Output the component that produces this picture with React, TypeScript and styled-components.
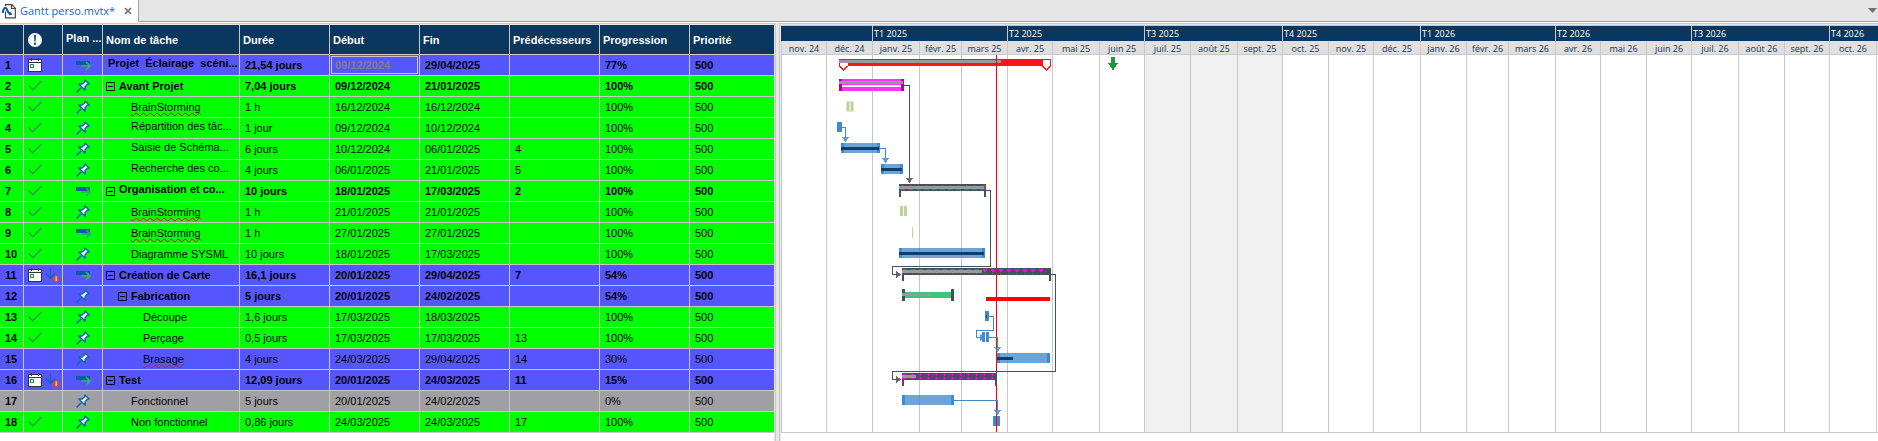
import React from "react";
import styled, { createGlobalStyle, css } from "styled-components";

const color = {
  navy: "#0a3760",
  line: "#c8c8c8",
  chrome: "#e6e6e6",
  blue: "#5656ff",
  green: "#00ff00",
  grey: "#a0a0a4",
  task: "#428bca",
  slate: "#46505c",
  done: "#999999",
  magenta: "#ff00ff",
};

const GlobalStyle = createGlobalStyle`
  *, *::before, *::after { box-sizing: border-box; }
  body { margin: 0; background: #fff; font-family: "Liberation Sans", Arial, sans-serif; font-size: 11px; color: #000; }
`;

const Page = styled.div`
  display: flex;
  flex-direction: column;
  min-height: 100vh;
  overflow: hidden;
`;

/* ---------- document tabs ---------- */

const TabBar = styled.header`
  display: flex;
  flex: none;
  height: 22px;
  margin-bottom: 1px;
  background: ${color.chrome};
`;

const Tab = styled.div`
  display: flex;
  align-items: center;
  gap: 4px;
  padding: 0 4px 0 2px;
  background: #fff;
  border-right: 1px solid #a0a0a0;
`;

const TabLink = styled.a`
  width: 98px;
  font: 11px/16px "Open Sans", "Segoe UI", sans-serif;
  color: #1e62c4;
  text-decoration: none;
  white-space: nowrap;
`;

const IconButton = styled.button`
  display: flex;
  align-items: center;
  justify-content: center;
  width: 12px;
  height: 16px;
  padding: 0;
  border: 0;
  background: none;
`;

const TabFiller = styled.div`
  display: flex;
  flex: 1;
  align-items: center;
  justify-content: flex-end;
  border-bottom: 1px solid #a0a0a0;
`;

/* ---------- split panes ---------- */

const Workspace = styled.main`
  display: flex;
  flex: 1;
`;

const TablePane = styled.section`
  flex: none;
  border: solid ${color.line};
  border-width: 1px 1px 0 0;
`;

const ChartPane = styled.section`
  flex: 1;
  min-width: 0;
  border: solid ${color.line};
  border-width: 1px 0 0 1px;
`;

const PaneInner = styled.div<{ $side: "left" | "right" }>`
  height: 100%;
  overflow: hidden;
  border: solid ${color.chrome};
  border-width: ${(p) => (p.$side === "left" ? "1px 1px 0 0" : "1px 0 0 1px")};
`;

const Splitter = styled.div`
  flex: none;
  width: 3px;
  background: ${color.chrome};
`;

/* ---------- task table ---------- */

const Table = styled.table`
  width: 774px;
  table-layout: fixed;
  border-collapse: separate;
  border-spacing: 0;
`;

const HeadCell = styled.th<{ $clipped?: boolean }>`
  height: 30px;
  padding: 0 0 ${(p) => (p.$clipped ? "4px" : "0")} 3px;
  border: solid ${color.line};
  border-width: 0 1px 1px 0;
  background: ${color.navy};
  color: #fff;
  text-align: left;
  line-height: 14px;
  white-space: nowrap;
  overflow: hidden;
  &:last-child { border-right: 0; }
`;

const Row = styled.tr<{ $tone: "blue" | "green" | "grey"; $bold?: boolean }>`
  background: ${(p) => color[p.$tone]};
  font-weight: ${(p) => (p.$bold ? 700 : 400)};
`;

const cellBase = css`
  height: 21px;
  padding: 0;
  border: solid ${color.line};
  border-width: 0 1px 1px 0;
  line-height: 14px;
  white-space: pre;
  overflow: hidden;
  &:last-child { border-right: 0; }
`;

const Cell = styled.td`
  ${cellBase}
  padding-left: 5px;
`;

const FlushCell = styled.td`
  ${cellBase}
`;

const NumberCell = styled.th`
  ${cellBase}
  padding-left: 5px;
  text-align: left;
  font-weight: 700;
`;

const EditCell = styled.td`
  ${cellBase}
  padding: 1px;
`;

const DateInput = styled.input`
  display: block;
  width: 100%;
  height: 18px;
  padding: 0 0 0 3px;
  border: 1px solid ${color.line};
  outline: 0;
  background: transparent;
  font: 700 11px "Liberation Sans", Arial, sans-serif;
  color: #808080;
`;

const IconRow = styled.div<{ $align: "start" | "center" | "head" }>`
  display: flex;
  align-items: center;
  justify-content: ${(p) => (p.$align === "center" ? "center" : "flex-start")};
  gap: 3px;
  padding-left: ${(p) => ({ start: 4, center: 0, head: 1 })[p.$align]}px;
`;

const NameRow = styled.div<{ $level: number }>`
  display: flex;
  align-items: center;
  gap: 4px;
  padding-left: ${(p) => 3 + p.$level * 12}px;
`;

type LabelKind = "root" | "summary" | "leaf";

const labelInset: Record<LabelKind, number> = { root: 2, summary: 0, leaf: 13 };

const NameText = styled.span<{ $kind: LabelKind; $clipped?: boolean }>`
  padding: 0 0 ${(p) => (p.$clipped ? "4px" : "0")} ${(p) => labelInset[p.$kind]}px;
`;

const Misspelt = styled.span`
  text-decoration: underline wavy #f00 1px;
  text-decoration-skip-ink: none;
  text-underline-offset: 1px;
`;

const Toggle = styled.button`
  display: block;
  flex: none;
  width: 9px;
  height: 9px;
  padding: 0;
  border: 0;
  background: none;
  svg { display: block; }
`;

/* ---------- icons ---------- */

const AlertIcon = () => (
  <svg width="14" height="14" viewBox="0 0 14 14" aria-hidden="true">
    <circle cx="7" cy="7" r="7" fill="#fff" />
    <path d="M6 2h2l-.3 6.400H6.300z" fill="#0a5aa5" />
    <circle cx="7" cy="10.700" r="1.200" fill="#0a5aa5" />
  </svg>
);

const CalendarIcon = () => (
  <svg width="14" height="14" viewBox="0 0 14 14" aria-hidden="true">
    <rect x=".5" y="1.500" width="13" height="12" fill="#fff" stroke="#333" />
    <path d="M.5 4.500h13M3.500 0v3M10.500 0v3" stroke="#333" fill="none" />
    <rect x="2.500" y="6.500" width="3" height="3" fill="#fff" stroke="#1c9640" />
  </svg>
);

const LateIcon = () => (
  <svg width="15" height="14" viewBox="0 0 15 14" aria-hidden="true">
    <path d="M5.500 0v10M.7 5.500l4.800 4.800 4.800-4.800" stroke="#1562b4" strokeWidth="1.300" fill="none" />
    <circle cx="11.300" cy="10.800" r="3.200" fill="#d8492c" />
    <path d="M11.300 8.500v4.500" stroke="#f5c5b5" strokeWidth="1.400" />
  </svg>
);

const CheckIcon = () => (
  <svg width="14" height="14" viewBox="0 0 14 14" aria-hidden="true">
    <path d="M.5 6.500l4.300 4.300L13.500 2" stroke="#2f9a4c" strokeWidth="1.500" fill="none" />
  </svg>
);

const PinIcon = () => (
  <svg width="14" height="14" viewBox="0 0 14 14" aria-hidden="true">
    <path d="M5.200 8.800L.6 13.400" stroke="#1464b4" strokeWidth="1.500" />
    <path
      d="M9 .9L13.100 5 11.300 5.200 9 7.800 9.300 11.200 2.800 4.900 6.200 5 8.800 2.700z"
      fill="#fff"
      stroke="#1464b4"
      strokeWidth="1.400"
      strokeLinejoin="round"
    />
  </svg>
);

const AutoIcon = ({ arrow }: { arrow: string }) => (
  <svg width="16" height="14" viewBox="0 0 16 14" aria-hidden="true">
    <path d="M1 3h14v4H1z" fill="#0a5aaa" />
    <path d="M6.500 8h8.500M11 4l4 4-4 4" stroke={arrow} strokeWidth="1.600" fill="none" />
  </svg>
);

const CollapseGlyph = () => (
  <svg width="9" height="9" viewBox="0 0 9 9" aria-hidden="true">
    <path d="M.5.5h8v8h-8zM2 4.500h5" stroke="#000" fill="none" />
  </svg>
);

const FileIcon = () => (
  <svg width="14" height="15" viewBox="0 0 14 15" aria-hidden="true">
    <path d="M3.500.7h6.300l3.500 3.500v9.600H3.500z" fill="#fff" stroke="#444" strokeWidth="1.200" />
    <path d="M9.500.7v3.800h3.800" fill="none" stroke="#444" strokeWidth="1.200" />
    <path d="M0 9C1 3 4 3 5 5.500c.8 2 1 4 4 4.500" fill="none" stroke="#fff" strokeWidth="4" />
    <path d="M.8 9C1 3.500 4 2.500 5 5.500c.6 2.500 1.500 4 4 4.500" fill="none" stroke="#0d5aa8" strokeWidth="2" />
    <path d="M8 7.500l2.500 3L7 11.500z" fill="#0d5aa8" />
  </svg>
);

/* ---------- data ---------- */

type Task = {
  tone: "blue" | "green" | "grey";
  flag?: "check" | "cal" | "late";
  plan: "pin" | "auto";
  level: number;
  kind: LabelKind;
  name: string;
  misspelt?: boolean;
  duration: string;
  start: string;
  end: string;
  pred?: string;
  progress: string;
};

const tasks: Task[] = [
  { tone: "blue", flag: "cal", plan: "auto", level: 0, kind: "root", name: "Projet  Éclairage  scéni...", duration: "21,54 jours", start: "09/12/2024", end: "29/04/2025", progress: "77%" },
  { tone: "green", flag: "check", plan: "pin", level: 0, kind: "summary", name: "Avant Projet", duration: "7,04 jours", start: "09/12/2024", end: "21/01/2025", progress: "100%" },
  { tone: "green", flag: "check", plan: "pin", level: 1, kind: "leaf", name: "BrainStorming", misspelt: true, duration: "1 h", start: "16/12/2024", end: "16/12/2024", progress: "100%" },
  { tone: "green", flag: "check", plan: "pin", level: 1, kind: "leaf", name: "Répartition des tâc...", duration: "1 jour", start: "09/12/2024", end: "10/12/2024", progress: "100%" },
  { tone: "green", flag: "check", plan: "pin", level: 1, kind: "leaf", name: "Saisie de Schéma...", duration: "6 jours", start: "10/12/2024", end: "06/01/2025", pred: "4", progress: "100%" },
  { tone: "green", flag: "check", plan: "pin", level: 1, kind: "leaf", name: "Recherche des co...", duration: "4 jours", start: "06/01/2025", end: "21/01/2025", pred: "5", progress: "100%" },
  { tone: "green", flag: "check", plan: "auto", level: 0, kind: "summary", name: "Organisation et co...", duration: "10 jours", start: "18/01/2025", end: "17/03/2025", pred: "2", progress: "100%" },
  { tone: "green", flag: "check", plan: "pin", level: 1, kind: "leaf", name: "BrainStorming", misspelt: true, duration: "1 h", start: "21/01/2025", end: "21/01/2025", progress: "100%" },
  { tone: "green", flag: "check", plan: "auto", level: 1, kind: "leaf", name: "BrainStorming", misspelt: true, duration: "1 h", start: "27/01/2025", end: "27/01/2025", progress: "100%" },
  { tone: "green", flag: "check", plan: "pin", level: 1, kind: "leaf", name: "Diagramme SYSML", duration: "10 jours", start: "18/01/2025", end: "17/03/2025", progress: "100%" },
  { tone: "blue", flag: "late", plan: "auto", level: 0, kind: "summary", name: "Création de Carte", duration: "16,1 jours", start: "20/01/2025", end: "29/04/2025", pred: "7", progress: "54%" },
  { tone: "blue", plan: "pin", level: 1, kind: "summary", name: "Fabrication", duration: "5 jours", start: "20/01/2025", end: "24/02/2025", progress: "54%" },
  { tone: "green", flag: "check", plan: "pin", level: 2, kind: "leaf", name: "Découpe", duration: "1,6 jours", start: "17/03/2025", end: "18/03/2025", progress: "100%" },
  { tone: "green", flag: "check", plan: "pin", level: 2, kind: "leaf", name: "Perçage", duration: "0,5 jours", start: "17/03/2025", end: "17/03/2025", pred: "13", progress: "100%" },
  { tone: "blue", plan: "pin", level: 2, kind: "leaf", name: "Brasage", misspelt: true, duration: "4 jours", start: "24/03/2025", end: "29/04/2025", pred: "14", progress: "30%" },
  { tone: "blue", flag: "late", plan: "auto", level: 0, kind: "summary", name: "Test", duration: "12,09 jours", start: "20/01/2025", end: "24/03/2025", pred: "11", progress: "15%" },
  { tone: "grey", plan: "pin", level: 1, kind: "leaf", name: "Fonctionnel", duration: "5 jours", start: "20/01/2025", end: "24/02/2025", progress: "0%" },
  { tone: "green", flag: "check", plan: "pin", level: 1, kind: "leaf", name: "Non fonctionnel", duration: "0,86 jours", start: "24/03/2025", end: "24/03/2025", pred: "17", progress: "100%" },
];

const columnWidths = [24, 39, 40, 137, 90, 90, 90, 90, 90, 84];

const quarters: { label: string; months: [string, number][]; shaded?: boolean }[] = [
  { label: "", months: [["nov. 24", 45], ["déc. 24", 46]] },
  { label: "T1 2025", months: [["janv. 25", 47], ["févr. 25", 42], ["mars 25", 46]] },
  { label: "T2 2025", months: [["avr. 25", 45], ["mai 25", 47], ["juin 25", 45]] },
  { label: "T3 2025", months: [["juil. 25", 46], ["août 25", 47], ["sept. 25", 45]], shaded: true },
  { label: "T4 2025", months: [["oct. 25", 46], ["nov. 25", 45], ["déc. 25", 47]] },
  { label: "T1 2026", months: [["janv. 26", 46], ["févr. 26", 42], ["mars 26", 47]] },
  { label: "T2 2026", months: [["avr. 26", 45], ["mai 26", 46], ["juin 26", 45]] },
  { label: "T3 2026", months: [["juil. 26", 47], ["août 26", 46], ["sept. 26", 45]] },
  { label: "T4 2026", months: [["oct. 26", 47], ["", 46]] },
];

/* ---------- table view ---------- */

function TaskRow({ task, index }: { task: Task; index: number }) {
  return (
    <Row $tone={task.tone} $bold={task.kind !== "leaf"}>
      <NumberCell scope="row">{index + 1}</NumberCell>
      <FlushCell>
        <IconRow $align="start">
          {task.flag === "check" && <CheckIcon />}
          {(task.flag === "cal" || task.flag === "late") && <CalendarIcon />}
          {task.flag === "late" && <LateIcon />}
        </IconRow>
      </FlushCell>
      <FlushCell>
        <IconRow $align="center">
          {task.plan === "pin" ? <PinIcon /> : <AutoIcon arrow={task.tone === "green" ? "#2fa866" : "#35b45c"} />}
        </IconRow>
      </FlushCell>
      <FlushCell>
        <NameRow $level={task.level}>
          {task.kind === "summary" && (
            <Toggle aria-label="Réduire">
              <CollapseGlyph />
            </Toggle>
          )}
          <NameText $kind={task.kind} $clipped={task.name.endsWith("...")}>
            {task.misspelt ? <Misspelt>{task.name}</Misspelt> : task.name}
          </NameText>
        </NameRow>
      </FlushCell>
      <Cell>{task.duration}</Cell>
      {task.kind === "root" ? (
        <EditCell>
          <DateInput aria-label="Début" defaultValue={task.start} />
        </EditCell>
      ) : (
        <Cell>{task.start}</Cell>
      )}
      <Cell>{task.end}</Cell>
      <Cell>{task.pred}</Cell>
      <Cell>{task.progress}</Cell>
      <Cell>500</Cell>
    </Row>
  );
}

/* ---------- time scale ---------- */

const Scale = styled.div`
  display: flex;
  border-top: 1px solid ${color.line};
`;

const Quarter = styled.div`
  flex: none;
`;

const QuarterLabel = styled.div<{ $first: boolean }>`
  height: 15px;
  padding-left: 1px;
  border-left: 1px solid ${(p) => (p.$first ? color.navy : color.line)};
  background: ${color.navy};
  color: #fff;
  font: 9px/15px "Open Sans", Tahoma, sans-serif;
`;

const Months = styled.div`
  display: flex;
`;

const Month = styled.div<{ $width: number }>`
  width: ${(p) => p.$width}px;
  height: 14px;
  border: solid ${color.line};
  border-width: 0 0 1px 1px;
  background: #e0e0e0;
  color: ${color.navy};
  font: 9px/15px "Open Sans", Tahoma, sans-serif;
  text-align: center;
  white-space: nowrap;
`;

const ChartSvg = styled.svg`
  display: block;
  width: 100%;
  height: 378px;
  border-bottom: 1px solid ${color.line};
`;

/* ---------- chart parts ---------- */

const TaskBar = ({ x1, x2, y, done }: { x1: number; x2: number; y: number; done?: number }) => (
  <g>
    <rect x={x1} y={y} width={x2 - x1} height={10} fill={color.task} fillOpacity={0.78} />
    <rect x={x1} y={y} width={3} height={10} fill={color.task} />
    <rect x={x2 - 3} y={y} width={3} height={10} fill={color.task} />
    {done && <rect x={x1} y={y + 4} width={done - x1} height={3} fill="#0a3f70" />}
  </g>
);

type Pattern = "up" | "down" | "both";

/* one repeat of the hatch: [x offset, y offset, width] of each one-pixel run */
const hatch: Record<Pattern, [number, number, number][]> = {
  up: [[3, 1, 1], [2, 3, 3], [1, 5, 5]],
  down: [[1, 1, 4], [1, 2, 4], [2, 3, 2], [2, 5, 1]],
  both: [[1, 1, 3], [2, 2, 1], [2, 4, 1], [1, 5, 3]],
};

const SummaryBar = ({ x1, x2, y, done, pattern }: { x1: number; x2: number; y: number; done: number; pattern: Pattern }) => {
  const marks: number[] = [];
  for (let x = x1; x + 5 < x2; x += 8) marks.push(x);
  return (
    <g>
      <rect x={x1} y={y} width={x2 - x1} height={7} fill={color.slate} />
      <rect x={x1} y={y} width={2} height={13} fill={color.slate} />
      <rect x={x2 - 2} y={y} width={2} height={13} fill={color.slate} />
      {marks.map((x) => (
        <g key={x} fill={color.magenta}>
          {hatch[pattern].map(([dx, dy, w]) => (
            <rect key={dy} x={x + dx} y={y + dy} width={w} height={1} />
          ))}
        </g>
      ))}
      <rect x={x1} y={y + 2} width={done - x1} height={3} fill={color.done} />
    </g>
  );
};

const Link = ({ d, dark }: { d: string; dark?: boolean }) => (
  <path d={d} fill="none" stroke={dark ? color.slate : color.task} />
);

const DownHead = ({ x, y, dark }: { x: number; y: number; dark?: boolean }) => (
  <path
    d={`M${x - 3} ${y}h7v1h-1v1h-1v2h-1v1h-1v-1h-1v-2h-1v-1h-1z`}
    fill={dark ? color.slate : color.task}
    fillOpacity={0.85}
  />
);

const RightHead = ({ x, y, dark }: { x: number; y: number; dark?: boolean }) => (
  <path
    d={`M${x} ${y - 3}h1v1h1v1h2v1h1v1h-1v1h-2v1h-1v1h-1z`}
    fill={dark ? color.slate : color.task}
    fillOpacity={0.85}
  />
);

function Chart() {
  const lines: number[] = [];
  let x = 0;
  let shade = { x: 0, w: 0 };
  quarters.forEach((q) => {
    const from = x;
    q.months.forEach(([, w]) => {
      lines.push(x);
      x += w;
    });
    if (q.shaded) shade = { x: from, w: x - from };
  });
  return (
    <ChartSvg shapeRendering="crispEdges" role="img" aria-label="Diagramme de Gantt">
      <rect x={shade.x} y={0} width={shade.w} height={377} fill="#f0f0f0" />
      {lines.map((l) => (
        <rect key={l} x={l} y={0} width={1} height={377} fill={color.line} />
      ))}

      <rect x={58} y={4} width={212} height={7} fill="#ff1414" />
      <rect x={58} y={5} width={162} height={3} fill={color.done} />
      <path d="M58.500 8v3l4 4 4-4v-3z" fill="#fff" />
      <path d="M58.500 8v3l4 4 4-4" fill="none" stroke="#ff1414" />
      <path d="M261.500 5v6l4 4 4-4V5z" fill="#fff" />
      <path d="M261.500 11l4 4 4-4V5" fill="none" stroke="#ff1414" />
      <path d="M330 2h4v6h3v1h-1v1h-1v2h-1v1h-1v2h-2v-2h-1v-1h-1v-2h-1v-1h-1V8h3z" fill="#1c9a3c" />

      <rect x={58} y={24} width={65} height={12} fill="#ff32ff" />
      <rect x={61} y={30} width={59} height={2} fill="#fff" />
      <rect x={58} y={24} width={3} height={12} fill="#b4009c" />
      <rect x={120} y={24} width={3} height={12} fill="#b4009c" />
      <rect x={58} y={26} width={64} height={3} fill={color.done} />

      <rect x={65} y={46} width={8} height={11} fill="#dfe9cd" />
      <path d="M66 47h2v9h-2zM70 47h2v9h-2z" fill="#bdd398" />

      <rect x={56} y={67} width={5} height={10} fill={color.task} />
      <TaskBar x1={60} x2={99} y={88} done={98} />
      <TaskBar x1={100} x2={122} y={109} done={121} />

      <SummaryBar x1={118} x2={205} y={129} done={203} pattern="up" />
      <rect x={203} y={130} width={1} height={5} fill={color.magenta} />

      <path d="M119 151h3v10h-3zM123 151h3v10h-3zM131 172h1v11h-1z" fill="#bdd398" />
      <TaskBar x1={118} x2={204} y={193} done={203} />
      <SummaryBar x1={121} x2={270} y={213} done={201} pattern="down" />

      <rect x={121} y={237} width={52} height={6} fill="#3cc47c" />
      <path d="M121 234h3v12h-3zM170 234h3v12h-3z" fill={color.slate} />
      <rect x={121} y={238} width={28} height={3} fill={color.done} />
      <rect x={205} y={242} width={64} height={4} fill="#f00" />

      <rect x={215} y={0} width={1} height={377} fill="#f00" />

      <rect x={204} y={256} width={4} height={10} fill={color.task} />
      <rect x={205} y={260} width={1} height={3} fill="#0a3f70" />
      <path d="M201 277h3v10h-3zM205 277h3v10h-3z" fill={color.task} />
      <TaskBar x1={216} x2={269} y={298} done={232} />
      <SummaryBar x1={121} x2={216} y={318} done={135} pattern="both" />
      <TaskBar x1={121} x2={173} y={340} />
      <rect x={212} y={361} width={7} height={10} fill={color.task} />
      <rect x={215} y={361} width={1} height={16} fill="#f00" />

      <Link dark d="M123 30.500h5.500V123" />
      <DownHead dark x={128} y={123} />
      <Link d="M61 72.500h3.500V82" />
      <DownHead x={64} y={82} />
      <Link d="M99 93.500h5.500V103" />
      <DownHead x={104} y={103} />
      <Link dark d="M205 135.500h4.500V211.500H111.500V219.500H116" />
      <RightHead dark x={115} y={219} />
      <Link dark d="M270 219.500h4.500V316.500H111.500V324.500H116" />
      <RightHead dark x={115} y={324} />
      <Link d="M208 261.500h4.500V275.500H195.500V282.500H201" />
      <RightHead x={199} y={282} />
      <Link d="M208 282.500h8.500V292" />
      <DownHead x={216} y={292} />
      <Link d="M173 345.500h43.500V355" />
      <DownHead x={216} y={355} />
    </ChartSvg>
  );
}

export default function App() {
  return (
    <Page>
      <GlobalStyle />
      <TabBar>
        <Tab>
          <FileIcon />
          <TabLink href="#gantt">Gantt perso.mvtx*</TabLink>
          <IconButton aria-label="Fermer">
            <svg width="8" height="8" viewBox="0 0 8 8" aria-hidden="true">
              <path d="M1 1l6 6M7 1L1 7" stroke="#707070" strokeWidth="1.600" />
            </svg>
          </IconButton>
        </Tab>
        <TabFiller>
          <IconButton aria-label="Liste des documents">
            <svg width="9" height="5" viewBox="0 0 9 5" aria-hidden="true">
              <path d="M0 0h9L4.500 5z" fill="#707070" />
            </svg>
          </IconButton>
        </TabFiller>
      </TabBar>
      <Workspace>
        <TablePane>
          <PaneInner $side="left">
            <Table>
              <colgroup>
                {columnWidths.map((w, i) => (
                  <col key={i} width={w} />
                ))}
              </colgroup>
              <thead>
                <tr>
                  <HeadCell />
                  <HeadCell scope="col" aria-label="Indicateurs">
                    <IconRow $align="head">
                      <AlertIcon />
                    </IconRow>
                  </HeadCell>
                  <HeadCell scope="col" $clipped>Plan ...</HeadCell>
                  <HeadCell scope="col">Nom de tâche</HeadCell>
                  <HeadCell scope="col">Durée</HeadCell>
                  <HeadCell scope="col">Début</HeadCell>
                  <HeadCell scope="col">Fin</HeadCell>
                  <HeadCell scope="col">Prédécesseurs</HeadCell>
                  <HeadCell scope="col">Progression</HeadCell>
                  <HeadCell scope="col">Priorité</HeadCell>
                </tr>
              </thead>
              <tbody>
                {tasks.map((t, i) => (
                  <TaskRow key={i} task={t} index={i} />
                ))}
              </tbody>
            </Table>
          </PaneInner>
        </TablePane>
        <Splitter />
        <ChartPane>
          <PaneInner $side="right">
            <Scale>
              {quarters.map((q, i) => (
                <Quarter key={i}>
                  <QuarterLabel $first={i === 0}>{q.label}</QuarterLabel>
                  <Months>
                    {q.months.map(([label, w], j) => (
                      <Month key={j} $width={w}>
                        {label}
                      </Month>
                    ))}
                  </Months>
                </Quarter>
              ))}
            </Scale>
            <Chart />
          </PaneInner>
        </ChartPane>
      </Workspace>
    </Page>
  );
}
